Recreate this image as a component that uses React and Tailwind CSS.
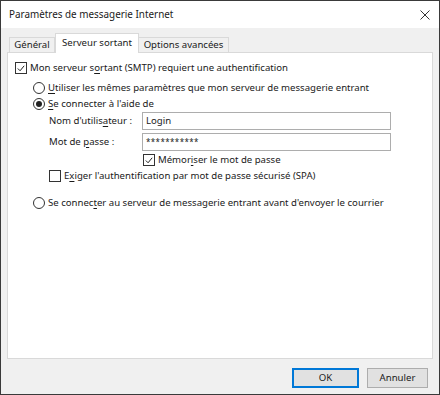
import React from 'react';

const Check = () => (
  <svg viewBox="0 0 11 11" className="w-[11px] h-[11px]">
    <path d="M2 5.5 L4.5 8 L9 2.5" fill="none" stroke="#222" strokeWidth="1.1" />
  </svg>
);

const CheckBox = ({ checked }) => (
  <span className="w-[12px] h-[12px] border border-[#333] bg-white flex items-center justify-center shrink-0">
    {checked && <Check />}
  </span>
);

const Radio = ({ checked }) => (
  <span className="w-[12px] h-[12px] rounded-full border border-[#333] bg-white flex items-center justify-center shrink-0">
    {checked && <span className="w-[6px] h-[6px] rounded-full bg-[#222]" />}
  </span>
);

const U = ({ children }) => <span className="underline underline-offset-2">{children}</span>;

export default function App() {
  return (
    <div className="w-[440px] h-[395px] border border-[#3a3a3a] bg-[#f0f0f0] flex flex-col text-[9.6px] text-[#1a1a1a] font-['Segoe_UI','Noto_Sans',sans-serif]">
      {/* title bar */}
      <div className="h-[27px] bg-white flex items-center justify-between pl-[8px] pr-[9px]">
        <span className="text-[9.9px]">Paramètres de messagerie Internet</span>
        <svg viewBox="0 0 10 10" className="w-[10px] h-[10px]">
          <path d="M0.5 0.5 L9.5 9.5 M9.5 0.5 L0.5 9.5" stroke="#333" strokeWidth="1" />
        </svg>
      </div>

      {/* tabs */}
      <div className="h-[24px] flex items-end pl-[8px]">
        <div className="h-[15px] w-[46px] border border-b-0 border-[#d9d9d9] bg-[#f0f0f0] flex items-center justify-center">
          Général
        </div>
        <div className="h-[20px] -mb-[1px] w-[84px] border border-b-0 border-[#d9d9d9] bg-white flex items-center justify-center relative z-10">
          Serveur sortant
        </div>
        <div className="h-[15px] w-[90px] border border-b-0 border-l-0 border-[#d9d9d9] bg-[#f0f0f0] flex items-center justify-center">
          Options avancées
        </div>
      </div>

      {/* panel */}
      <div className="h-[307px] mx-[6px] border border-[#d9d9d9] bg-white flex flex-col pl-[7px] pt-[7px]">
        <div className="h-[16px] flex items-center gap-[3px]">
          <CheckBox checked />
          <span>Mon serveur s<U>o</U>rtant (SMTP) requiert une authentification</span>
        </div>
        <div className="h-[16px] mt-[4px] ml-[18px] flex items-center gap-[3px]">
          <Radio />
          <span><U>U</U>tiliser les mêmes paramètres que mon serveur de messagerie entrant</span>
        </div>
        <div className="h-[16px] ml-[18px] flex items-center gap-[3px]">
          <Radio checked />
          <span><U>S</U>e connecter à l'aide de</span>
        </div>
        <div className="h-[18px] ml-[34px] flex items-center">
          <span className="w-[93px]">Nom d'utilis<U>a</U>teur :</span>
          <div className="w-[249px] h-[18px] border border-[#adadad] bg-white flex items-center pl-[3px]">Login</div>
        </div>
        <div className="h-[18px] mt-[3px] ml-[34px] flex items-center">
          <span className="w-[93px]">Mot de <U>p</U>asse :</span>
          <div className="w-[249px] h-[18px] border border-[#adadad] bg-white flex items-center pl-[3px] text-[8px] tracking-[0.4px]">***********</div>
        </div>
        <div className="h-[16px] mt-[1px] ml-[128px] flex items-center gap-[3px]">
          <CheckBox checked />
          <span>Mémor<U>i</U>ser le mot de passe</span>
        </div>
        <div className="h-[16px] ml-[34px] flex items-center gap-[3px]">
          <CheckBox />
          <span>E<U>x</U>iger l'authentification par mot de passe sécurisé (SPA)</span>
        </div>
        <div className="h-[16px] mt-[11px] ml-[18px] flex items-center gap-[3px]">
          <Radio />
          <span>Se connec<U>t</U>er au serveur de messagerie entrant avant d'envoyer le courrier</span>
        </div>
      </div>

      {/* buttons */}
      <div className="flex justify-end gap-[8px] mt-[9px] pr-[11px]">
        <button className="w-[67px] h-[20px] bg-[#e1e1e1] border-2 border-[#0078d7] flex items-center justify-center">OK</button>
        <button className="w-[61px] h-[20px] bg-[#e1e1e1] border border-[#adadad] flex items-center justify-center">Annuler</button>
      </div>
    </div>
  );
}
